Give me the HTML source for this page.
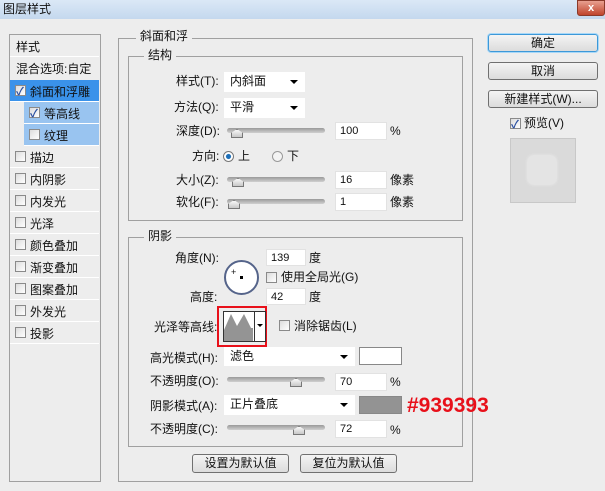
<!DOCTYPE html>
<html><head><meta charset="utf-8"><style>
*{margin:0;padding:0;box-sizing:border-box}
body{width:605px;height:491px;background:#ededed;position:relative;overflow:hidden;font-family:"Liberation Sans","Noto Sans CJK SC",sans-serif;font-size:12px;color:#111}
.a{position:absolute}
.t{position:absolute;line-height:14px;white-space:nowrap}
.grp{position:absolute;border:1px solid #a0a0a0}
.lg{position:absolute;background:#ededed;padding:0 4px;line-height:14px}
.inp{position:absolute;background:#fff;border:1px solid #e2e2e2;font-size:11px;padding-left:4px;line-height:16px}
.dd{position:absolute;background:#fff;padding-left:6px;line-height:19px}
.dd:after{content:"";position:absolute;right:7px;top:8px;border:4px solid transparent;border-top:4px solid #000;border-bottom:0}
.sl{position:absolute;height:5px;background:linear-gradient(#9a9a9a,#d0d0d0);border-radius:3px}
.th{position:absolute;width:12px;height:9px;background:linear-gradient(#f8f8f8,#c8c8c8);border:1px solid #777;clip-path:polygon(50% 0,100% 45%,100% 100%,0 100%,0 45%)}
.cb{position:absolute;width:11px;height:11px;border:1px solid #8a8a8a;background:linear-gradient(135deg,#dcdcdc,#fff)}
.ck:after{content:"✓";position:absolute;left:0;top:-3px;font-size:11px;color:#2a4fa0;font-weight:bold}
.btn{position:absolute;border:1px solid #707070;border-radius:3px;background:linear-gradient(#f4f4f4,#dcdcdc);text-align:center;line-height:16px}
.li{position:absolute;left:10px;width:89px;height:22px;border-bottom:1px solid #fff}
.li span{position:absolute;left:20px;top:3px}
.li .cb{left:5px;top:5px}
</style></head><body>
<div class="a" style="left:0;top:0;width:605px;height:19px;background:linear-gradient(#dbe8f6,#c4d8ee)"></div>
<div class="t" style="left:3px;top:2px;font-size:12px">图层样式</div>
<div class="a" style="left:577px;top:0;width:28px;height:16px;background:linear-gradient(#e8a090,#c0442c);border:1px solid #8a3a2a;border-radius:0 0 3px 3px;color:#fff;text-align:center;font-size:11px;line-height:14px;font-weight:bold">x</div>

<div class="a" style="left:9px;top:34px;width:92px;height:448px;border:1px solid #a0a0a0"></div>
<div class="li" style="top:35px"><span style="left:6px">样式</span></div>
<div class="li" style="top:57px;border-bottom:0"><span style="left:6px">混合选项:自定</span></div>
<div class="li" style="top:80px;background:#3a92ea;color:#111"><div class="cb ck"></div><span>斜面和浮雕</span></div>
<div class="li" style="top:102px;left:24px;width:75px;background:#99c4f0"><div class="cb ck"></div><span>等高线</span></div>
<div class="li" style="top:124px;left:24px;width:75px;background:#99c4f0"><div class="cb"></div><span>纹理</span></div>
<div class="li" style="top:146px"><div class="cb"></div><span>描边</span></div>
<div class="li" style="top:168px"><div class="cb"></div><span>内阴影</span></div>
<div class="li" style="top:190px"><div class="cb"></div><span>内发光</span></div>
<div class="li" style="top:212px"><div class="cb"></div><span>光泽</span></div>
<div class="li" style="top:234px"><div class="cb"></div><span>颜色叠加</span></div>
<div class="li" style="top:256px"><div class="cb"></div><span>渐变叠加</span></div>
<div class="li" style="top:278px"><div class="cb"></div><span>图案叠加</span></div>
<div class="li" style="top:300px"><div class="cb"></div><span>外发光</span></div>
<div class="li" style="top:322px"><div class="cb"></div><span>投影</span></div>

<div class="grp" style="left:118px;top:38px;width:355px;height:444px"></div>
<div class="lg" style="left:136px;top:29px">斜面和浮</div>
<div class="grp" style="left:128px;top:56px;width:335px;height:165px"></div>
<div class="lg" style="left:144px;top:48px">结构</div>
<div class="t" style="left:176px;top:74px">样式(T):</div>
<div class="dd" style="left:224px;top:72px;width:81px;height:20px">内斜面</div>
<div class="t" style="left:174px;top:100px">方法(Q):</div>
<div class="dd" style="left:224px;top:98px;width:81px;height:20px">平滑</div>
<div class="t" style="left:176px;top:124px">深度(D):</div>
<div class="sl" style="left:227px;top:128px;width:98px"></div><div class="th" style="left:231px;top:129px"></div>
<div class="inp" style="left:335px;top:122px;width:52px;height:18px">100</div>
<div class="t" style="left:390px;top:124px">%</div>
<div class="t" style="left:192px;top:149px">方向:</div>
<div class="a" style="left:223px;top:151px;width:11px;height:11px;border-radius:50%;background:radial-gradient(#1d6fb8 35%,#fff 45%);border:1px solid #777"></div>
<div class="t" style="left:238px;top:149px">上</div>
<div class="a" style="left:272px;top:151px;width:11px;height:11px;border-radius:50%;background:#f4f4f4;border:1px solid #999"></div>
<div class="t" style="left:287px;top:149px">下</div>
<div class="t" style="left:176px;top:173px">大小(Z):</div>
<div class="sl" style="left:227px;top:177px;width:98px"></div><div class="th" style="left:232px;top:178px"></div>
<div class="inp" style="left:335px;top:171px;width:52px;height:18px">16</div>
<div class="t" style="left:390px;top:173px">像素</div>
<div class="t" style="left:176px;top:195px">软化(F):</div>
<div class="sl" style="left:227px;top:199px;width:98px"></div><div class="th" style="left:228px;top:200px"></div>
<div class="inp" style="left:335px;top:193px;width:52px;height:18px">1</div>
<div class="t" style="left:390px;top:195px">像素</div>

<div class="grp" style="left:128px;top:237px;width:335px;height:210px"></div>
<div class="lg" style="left:144px;top:229px">阴影</div>
<div class="t" style="left:175px;top:251px">角度(N):</div>
<div class="inp" style="left:266px;top:249px;width:40px;height:17px">139</div>
<div class="t" style="left:309px;top:251px">度</div>
<div class="a" style="left:224px;top:260px;width:35px;height:35px;border-radius:50%;border:2px solid #55648a;background:#fff"></div>
<div class="t" style="left:231px;top:265px;font-size:9px">+</div>
<div class="a" style="left:240px;top:276px;width:3px;height:3px;background:#000"></div>
<div class="cb" style="left:266px;top:272px"></div>
<div class="t" style="left:281px;top:270px">使用全局光(G)</div>
<div class="t" style="left:190px;top:290px">高度:</div>
<div class="inp" style="left:266px;top:288px;width:40px;height:17px">42</div>
<div class="t" style="left:309px;top:290px">度</div>
<div class="t" style="left:154px;top:320px">光泽等高线:</div>
<div class="a" style="left:217px;top:306px;width:50px;height:41px;border:2px solid #e8101a"></div>
<div class="a" style="left:223px;top:311px;width:43px;height:31px;background:#fff;border:1px solid #333"></div>
<svg class="a" style="left:224px;top:312px" width="30" height="29"><path d="M0 29 L0 18 L7 2 L13 14 L20 2 L27 16 L29 16 L29 29Z" fill="#949494"/></svg>
<div class="a" style="left:254px;top:312px;width:1px;height:29px;background:#333"></div>
<div class="a" style="left:257px;top:324px;border:3px solid transparent;border-top:3px solid #000"></div>
<div class="cb" style="left:279px;top:320px"></div>
<div class="t" style="left:294px;top:319px">消除锯齿(L)</div>
<div class="t" style="left:150px;top:351px">高光模式(H):</div>
<div class="dd" style="left:224px;top:347px;width:131px;height:19px">滤色</div>
<div class="a" style="left:359px;top:347px;width:43px;height:18px;background:#fff;border:1px solid #888"></div>
<div class="t" style="left:150px;top:374px">不透明度(O):</div>
<div class="sl" style="left:227px;top:377px;width:98px"></div><div class="th" style="left:290px;top:378px"></div>
<div class="inp" style="left:335px;top:373px;width:52px;height:18px">70</div>
<div class="t" style="left:390px;top:375px">%</div>
<div class="t" style="left:150px;top:399px">阴影模式(A):</div>
<div class="dd" style="left:224px;top:395px;width:131px;height:20px">正片叠底</div>
<div class="a" style="left:359px;top:396px;width:43px;height:18px;background:#939393;border:1px solid #888"></div>
<div class="t" style="left:407px;top:395px;color:#e8101a;font-weight:bold;font-size:21px;line-height:21px">#939393</div>
<div class="t" style="left:150px;top:422px">不透明度(C):</div>
<div class="sl" style="left:227px;top:425px;width:98px"></div><div class="th" style="left:293px;top:426px"></div>
<div class="inp" style="left:335px;top:420px;width:52px;height:18px">72</div>
<div class="t" style="left:390px;top:423px">%</div>

<div class="btn" style="left:192px;top:454px;width:97px;height:19px">设置为默认值</div>
<div class="btn" style="left:300px;top:454px;width:97px;height:19px">复位为默认值</div>

<div class="btn" style="left:488px;top:34px;width:110px;height:18px;border-color:#3c98d8;box-shadow:0 0 0 1px #a8d8f8">确定</div>
<div class="btn" style="left:488px;top:62px;width:110px;height:18px">取消</div>
<div class="btn" style="left:488px;top:90px;width:110px;height:18px">新建样式(W)...</div>
<div class="cb ck" style="left:510px;top:118px"></div>
<div class="t" style="left:524px;top:116px">预览(V)</div>
<div class="a" style="left:510px;top:138px;width:66px;height:65px;background:#dadada;border:1px solid #c8c8c8"></div>
<div class="a" style="left:528px;top:156px;width:28px;height:28px;background:#e4e4e4;border-radius:5px;box-shadow:0 0 3px #f4f4f4"></div>
</body></html>
